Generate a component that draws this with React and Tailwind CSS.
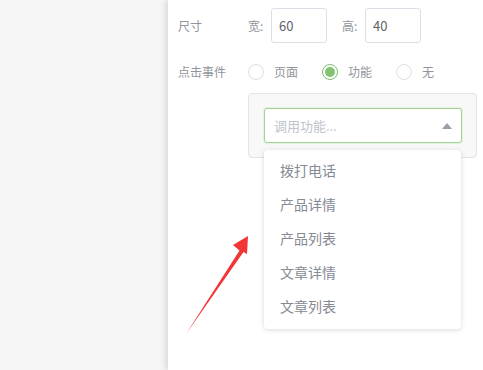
import React from "react";

const font = { fontFamily: '"Noto Sans CJK SC", "Noto Sans", sans-serif' };

function Radio({ checked, label }) {
  return (
    <div className="flex items-center w-[74px]">
      {checked ? (
        <span className="w-[16px] h-[16px] rounded-full border border-[#7fbf6c] flex items-center justify-center bg-white">
          <span className="w-[10px] h-[10px] rounded-full bg-[#82c272]" />
        </span>
      ) : (
        <span className="w-[16px] h-[16px] rounded-full border border-[#dcdfe6] bg-white" />
      )}
      <span className="ml-[10px] text-[12px] text-[#90949c] leading-none">{label}</span>
    </div>
  );
}

export default function App() {
  const items = ["拨打电话", "产品详情", "产品列表", "文章详情", "文章列表"];
  return (
    <div className="relative w-[483px] h-[370px] overflow-hidden flex bg-white" style={font}>
      <div className="w-[168px] h-full bg-[#f5f5f5]" />
      <div className="flex-1 h-full bg-white shadow-[-3px_0_5px_rgba(0,0,0,0.1)] pl-[10px] pt-[8px]">
        <div className="flex items-center h-[35px]">
          <span className="w-[70px] text-[12px] text-[#90949c]">尺寸</span>
          <span className="w-[23px] text-[12px] text-[#90949c]">宽:</span>
          <div className="w-[56px] h-[35px] border border-[#dcdfe6] rounded-[3px] flex items-center pl-[7px] text-[13px] text-[#606266]">60</div>
          <span className="ml-[15px] w-[23px] text-[12px] text-[#90949c]">高:</span>
          <div className="w-[56px] h-[35px] border border-[#dcdfe6] rounded-[3px] flex items-center pl-[7px] text-[13px] text-[#606266]">40</div>
        </div>
        <div className="flex items-center h-[20px] mt-[19px]">
          <span className="w-[70px] text-[12px] text-[#90949c]">点击事件</span>
          <Radio label="页面" />
          <Radio checked label="功能" />
          <Radio label="无" />
        </div>
        <div className="ml-[70px] mt-[11px] w-[229px] h-[65px] bg-[#f8f8f8] border border-[#e4e4e4] rounded-[4px] pl-[15px] pt-[14px]">
          <div className="relative w-[198px] h-[35px] bg-white border border-[#a3d494] rounded-[3px] shadow-[0_0_0_1px_rgba(130,194,114,0.15)] flex items-center pl-[9px] justify-between pr-[9px]">
            <span className="text-[13px] text-[#c0c4cc]">调用功能...</span>
            <svg width="10" height="6" viewBox="0 0 10 6"><path d="M0 6 L5 0 L10 6 Z" fill="#9aa0a8" /></svg>
          </div>
        </div>
      </div>
      <div className="absolute left-[264px] top-[150px] w-[197px] bg-white rounded-[4px] shadow-[0_1px_5px_rgba(0,0,0,0.15)] pt-[3px] pb-[6px]">
        {items.map((t) => (
          <div key={t} className="h-[34px] flex items-center pl-[16px] text-[14px] text-[#858a93]">{t}</div>
        ))}
      </div>
      <svg className="absolute left-0 top-0" width="483" height="370" viewBox="0 0 483 370">
        <path d="M186 334 L239.5 250.5 L233 245 L248 236 L247 254 L243.5 252 Z" fill="#f23535" />
      </svg>
    </div>
  );
}
